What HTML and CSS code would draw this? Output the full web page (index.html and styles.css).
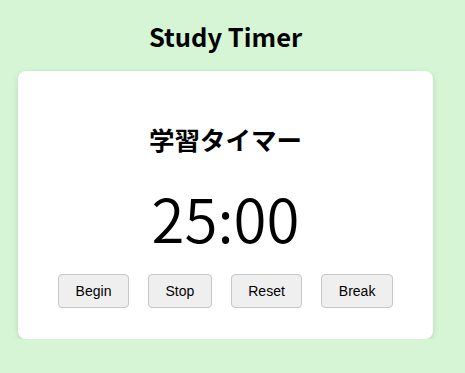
FILE: index.html
```html
<!DOCTYPE html>
<html lang="ja">
<head>
<meta charset="utf-8">
<title>Study Timer</title>
<link rel="stylesheet" href="styles.css">
</head>
<body>
<main class="app">
  <h1 class="title">Study Timer</h1>
  <section class="card">
    <h2 class="subtitle">学習タイマー</h2>
    <div class="time">25:00</div>
    <div class="controls">
      <button class="btn" type="button">Begin</button>
      <button class="btn" type="button">Stop</button>
      <button class="btn" type="button">Reset</button>
      <button class="btn" type="button">Break</button>
    </div>
  </section>
</main>
</body>
</html>
```

FILE: styles.css
```css
html, body {
  margin: 0;
  padding: 0;
}
body {
  background: #d5f5d5;
  font-family: "Noto Sans CJK JP", "Noto Sans", sans-serif;
  color: #000;
}
.app {
  width: 415px;
  margin-left: 18px;
  padding-top: 18px;
}
.title {
  margin: 0 0 17px;
  font-size: 25.5px;
  line-height: 36px;
  font-weight: 700;
  text-align: center;
}
.card {
  background: #fff;
  border-radius: 8px;
  box-shadow: 0 2px 6px rgba(0, 0, 0, 0.12);
  padding: 50px 0 31px;
  text-align: center;
}
.subtitle {
  margin: 0;
  font-size: 25.5px;
  line-height: 36px;
  font-weight: 700;
}
.time {
  margin-top: 21px;
  font-size: 60px;
  line-height: 77px;
  font-weight: 350;
}
.controls {
  margin-top: 19px;
  display: flex;
  justify-content: center;
  gap: 19px;
}
.btn {
  font-family: "Liberation Sans", Arial, sans-serif;
  font-size: 14px;
  line-height: 16px;
  padding: 8px 16.5px;
  color: #000;
  background: #efefef;
  border: 1px solid #c8c8c8;
  border-radius: 4px;
}
```
